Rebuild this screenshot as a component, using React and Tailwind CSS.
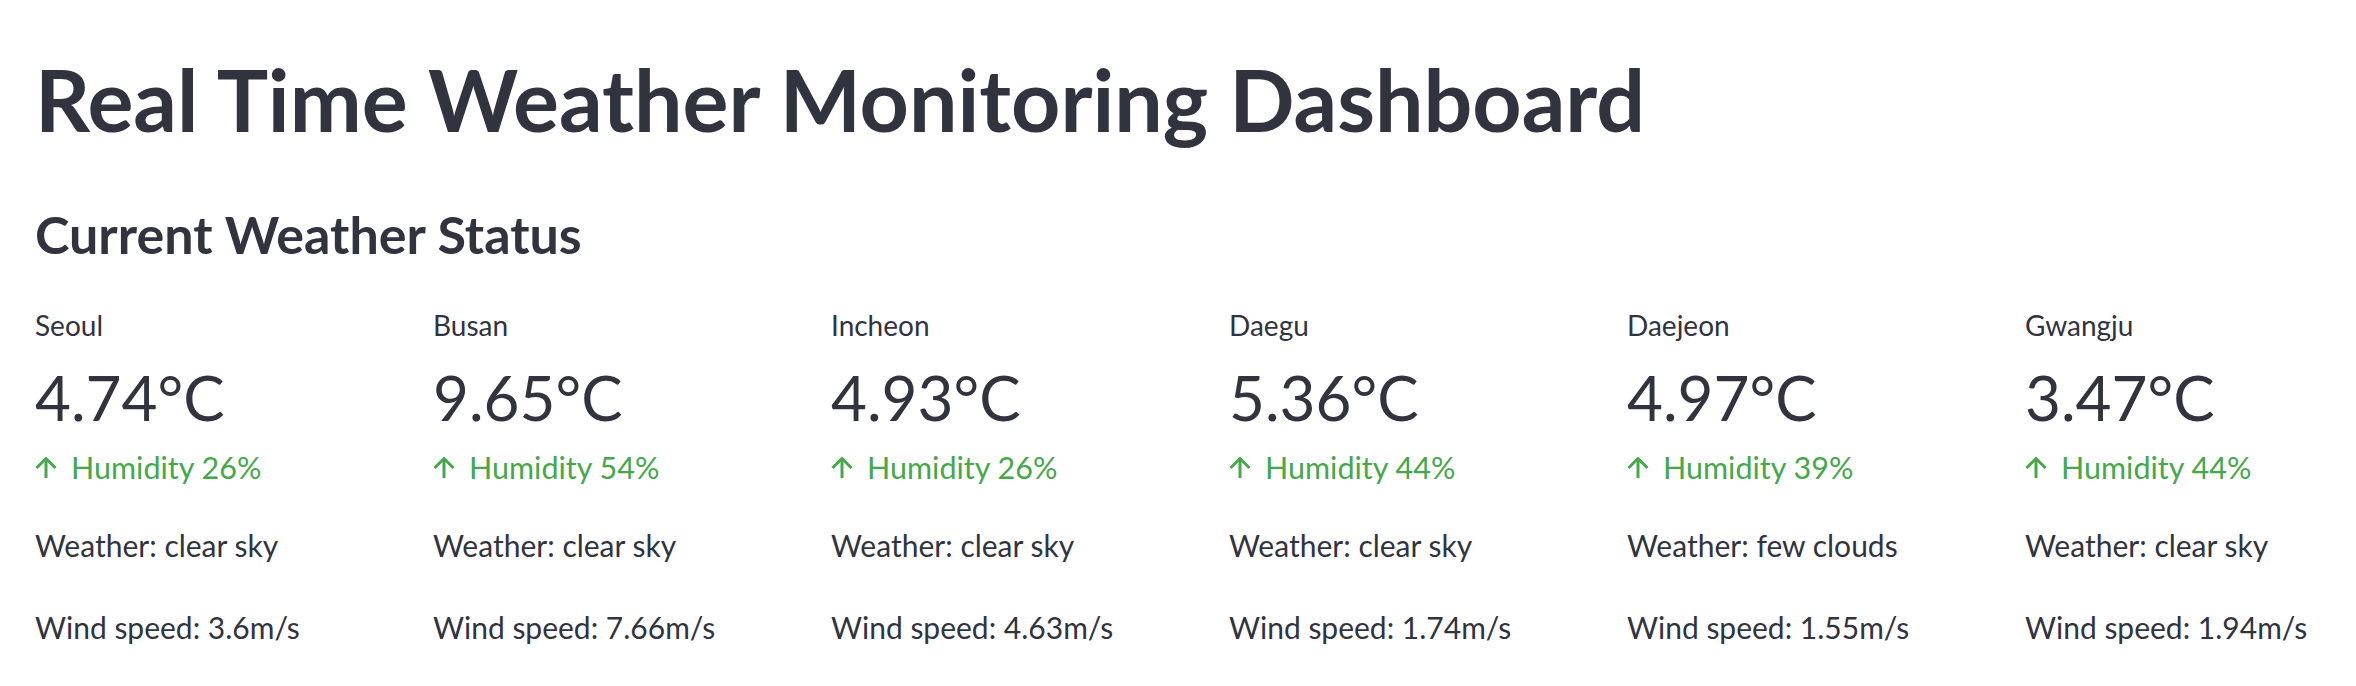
import React from 'react';

const cities = [
  { name: 'Seoul', temp: '4.74°C', humidity: 26, weather: 'clear sky', wind: '3.6m/s' },
  { name: 'Busan', temp: '9.65°C', humidity: 54, weather: 'clear sky', wind: '7.66m/s' },
  { name: 'Incheon', temp: '4.93°C', humidity: 26, weather: 'clear sky', wind: '4.63m/s' },
  { name: 'Daegu', temp: '5.36°C', humidity: 44, weather: 'clear sky', wind: '1.74m/s' },
  { name: 'Daejeon', temp: '4.97°C', humidity: 39, weather: 'few clouds', wind: '1.55m/s' },
  { name: 'Gwangju', temp: '3.47°C', humidity: 44, weather: 'clear sky', wind: '1.94m/s' },
];

const ArrowUp = () => (
  <svg className="shrink-0" width="22" height="22" viewBox="0 0 22 22" fill="none" stroke="currentColor" strokeWidth="3">
    <path d="M11 2.5V22" />
    <path d="M1.5 12L11 2.5L20.5 12" />
  </svg>
);

// one metric column per city
const CityMetric = ({ city }) => (
  <div className="flex flex-col whitespace-nowrap">
    <div className="text-[28px] leading-[34px]">{city.name}</div>
    <div className="mt-[12px] text-[62px] leading-[86px]">{city.temp}</div>
    <div className="mt-[8px] flex items-center gap-[14px] text-[30.5px] leading-[38px] text-[#45a84a]">
      <ArrowUp />
      <span>Humidity {city.humidity}%</span>
    </div>
    <p className="mt-[40px] text-[30px] leading-[38px]">Weather: {city.weather}</p>
    <p className="mt-[44px] text-[30px] leading-[38px]">Wind speed: {city.wind}</p>
  </div>
);

export default function App() {
  return (
    <div
      className="h-[686px] w-full overflow-hidden bg-white px-[35px] pt-[46px] text-[#31333f]"
      style={{ fontFamily: 'Lato, "Noto Sans", sans-serif' }}
    >
      <h1 className="text-[86px] font-bold leading-[106px]">Real Time Weather Monitoring Dashboard</h1>
      <h3 className="mt-[48px] text-[52px] font-bold leading-[68px]">Current Weather Status</h3>
      <div className="mt-[40px] grid grid-cols-6 gap-x-[102px]">
        {cities.map((c) => (
          <CityMetric key={c.name} city={c} />
        ))}
      </div>
    </div>
  );
}
